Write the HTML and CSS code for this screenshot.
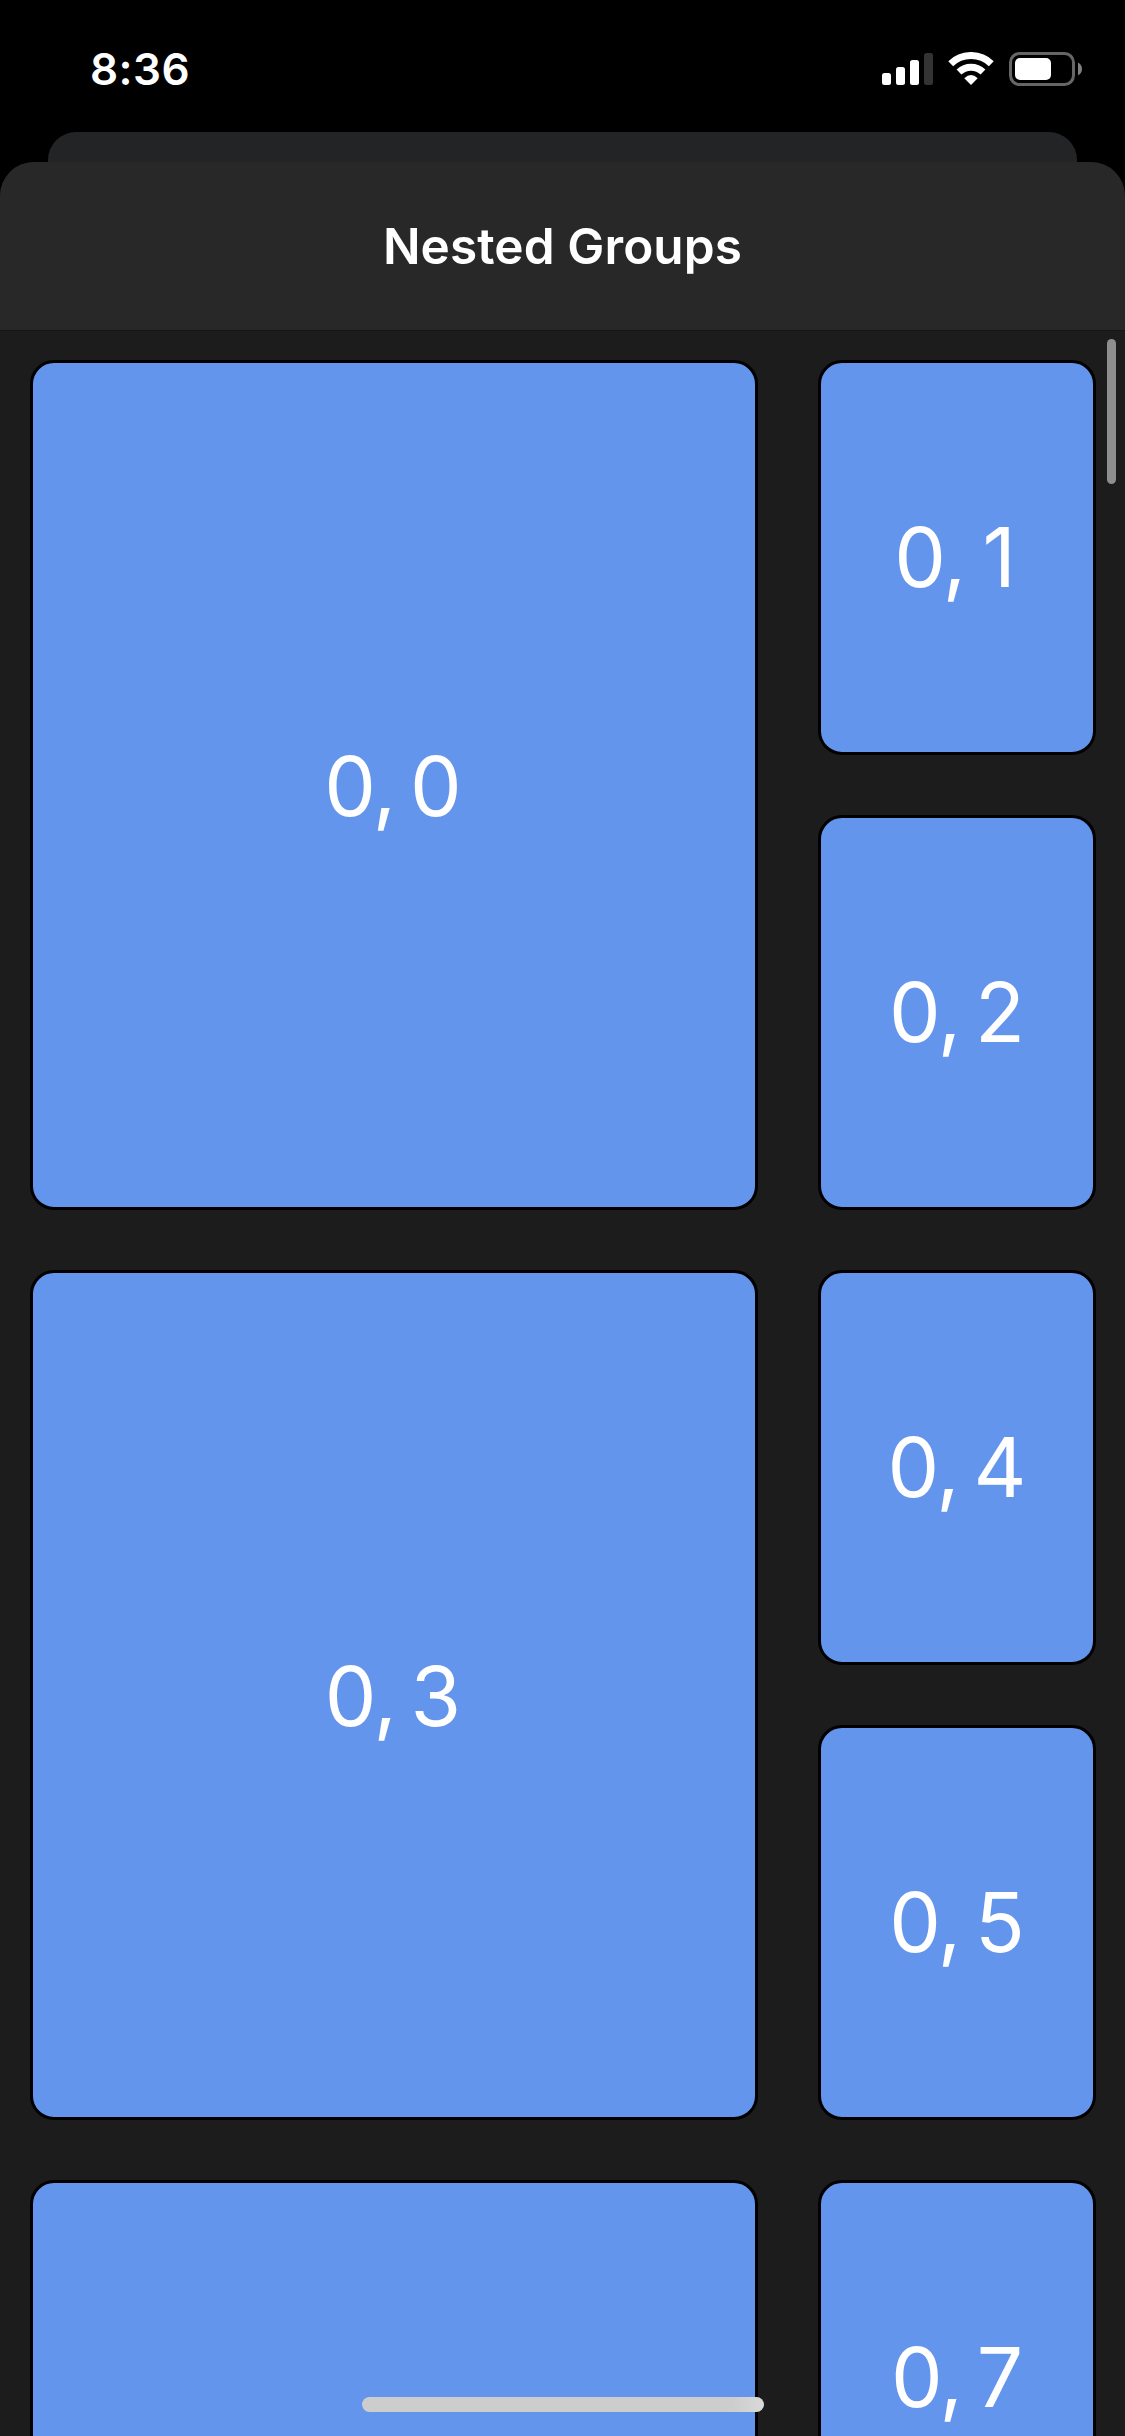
FILE: index.html
```
<!DOCTYPE html>
<html lang="en">
<head>
<meta charset="utf-8">
<title>Nested Groups</title>
<link rel="stylesheet" href="styles.css">
</head>
<body>
<div class="screen">
  <header class="status">
    <span class="time">8:36</span>
    <svg class="status-icons" width="202" height="36" viewBox="0 0 202 36">
      <g fill="#fff">
        <rect x="0" y="21" width="9" height="12" rx="2.5"/>
        <rect x="14" y="15" width="9" height="18" rx="2.5"/>
        <rect x="28" y="8" width="9" height="25" rx="2.5"/>
        <rect x="42" y="1" width="9" height="32" rx="2.5" fill="#333"/>
      </g>
      <g fill="none" stroke="#fff" stroke-width="7">
        <path d="M68.7 11.7A29.2 29.2 0 0 1 109.3 11.7"/>
        <path d="M77 20A17.6 17.6 0 0 1 101 20"/>
      </g>
      <path d="M82.3 26.2Q89 20 95.7 26.2L89 33Z" fill="#fff"/>
      <rect x="128.5" y="1.5" width="63" height="31" rx="9" fill="none" stroke="#666" stroke-width="3"/>
      <rect x="133" y="6" width="36" height="22" rx="5" fill="#fff"/>
      <path d="M196 10.5Q200 12.500 200 17T196 23.200Z" fill="#808080"/>
    </svg>
  </header>
  <div class="back-sheet"></div>
  <main class="sheet">
    <h1 class="title">Nested Groups</h1>
    <div class="grid">
      <div class="card large">0, 0</div>
      <div class="card narrow-digit">0, 1</div>
      <div class="card">0, 2</div>
      <div class="card large">0, 3</div>
      <div class="card">0, 4</div>
      <div class="card">0, 5</div>
      <div class="card large"></div>
      <div class="card">0, 7</div>
      <div class="card"></div>
    </div>
    <div class="scrollbar"></div>
  </main>
  <div class="home-indicator"></div>
</div>
</body>
</html>
```
FILE: styles.css
```
* { box-sizing: border-box; }
body { margin: 0; background: #000; }
.screen {
  position: relative;
  display: flex;
  flex-direction: column;
  width: 1125px;
  height: 2436px;
  overflow: hidden;
  background: #000;
  color: #fff;
  font-family: Inter, "Liberation Sans", sans-serif;
}
.status {
  display: flex;
  flex: none;
  align-items: center;
  justify-content: space-between;
  height: 132px;
  padding: 8px 41px 0 90px;
}
.time { padding-bottom: 2px; font-size: 44px; font-weight: 600; line-height: 60px; letter-spacing: 0.4px; }
.status-icons { display: block; }
.back-sheet {
  flex: none;
  height: 30px;
  margin: 0 48px;
  border-radius: 28px 28px 0 0;
  background: #232426;
}
.sheet {
  position: relative;
  flex: 1;
  min-height: 0;
  overflow: hidden;
  border-radius: 34px 34px 0 0;
  background: #1c1c1c;
}
.title {
  height: 169px;
  margin: 0;
  border-bottom: 1px solid #151515;
  background: #282828;
  font-size: 49.5px;
  font-weight: 600;
  line-height: 168px;
  letter-spacing: 0.1px;
  text-align: center;
}
.grid {
  display: grid;
  grid-template-columns: 728px 278px;
  grid-auto-rows: 395px;
  gap: 60px;
  padding: 29px 29px 0 30px;
}
.card {
  display: flex;
  align-items: center;
  justify-content: center;
  padding-right: 1px;
  border: 3px solid #000;
  border-radius: 24px;
  background: #6495ed;
  font-size: 82px;
  letter-spacing: -1px;
  word-spacing: -7.5px;
}
.large {
  grid-row: span 2;
  padding: 2px 3px 0 0;
}
.narrow-digit {
  padding-right: 5px;
  word-spacing: -5px;
}
.scrollbar {
  position: absolute;
  top: 177px;
  right: 9px;
  width: 9px;
  height: 145px;
  border-radius: 5px;
  background: #8e8e8e;
}
.home-indicator {
  position: absolute;
  left: 362px;
  bottom: 24px;
  width: 402px;
  height: 15px;
  border-radius: 8px;
  background: linear-gradient(90deg, #cdcdcd 92%, #d9d9d9);
}
```
